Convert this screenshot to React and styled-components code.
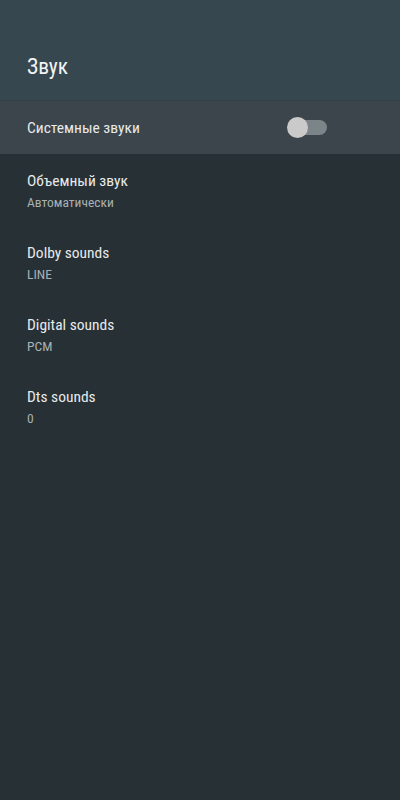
import React from 'react';
import styled, { createGlobalStyle } from 'styled-components';

const items = [
  { title: 'Объемный звук', value: 'Автоматически' },
  { title: 'Dolby sounds', value: 'LINE' },
  { title: 'Digital sounds', value: 'PCM' },
  { title: 'Dts sounds', value: '0' },
];

const App = () => {
  return (
    <Screen>
      <GlobalStyle />
      <Header>
        <Title>Звук</Title>
      </Header>
      <ToggleRow>
        <RowLabel>Системные звуки</RowLabel>
        <Switch>
          <Knob />
        </Switch>
      </ToggleRow>
      <List>
        {items.map((item) => (
          <Item key={item.title}>
            <ItemTitle>{item.title}</ItemTitle>
            <ItemValue>{item.value}</ItemValue>
          </Item>
        ))}
      </List>
    </Screen>
  );
};

const GlobalStyle = createGlobalStyle`
  html, body {
    margin: 0;
    padding: 0;
    background: #263035;
  }
  * {
    box-sizing: border-box;
  }
`;

const Screen = styled.div`
  width: 400px;
  height: 800px;
  display: flex;
  flex-direction: column;
  background: #263035;
  font-family: Roboto, 'Noto Sans', sans-serif;
  font-stretch: 80%;
  color: #eceff1;
`;

const Header = styled.header`
  height: 101px;
  display: flex;
  align-items: flex-start;
  padding: 53px 27px 0;
  background: #37474f;
  border-bottom: 1px solid #313e45;
`;

const Title = styled.h1`
  margin: 0;
  font-size: 21.5px;
  line-height: 28px;
  font-weight: 400;
  color: #f2f4f5;
`;

const ToggleRow = styled.div`
  height: 53px;
  display: flex;
  align-items: center;
  justify-content: space-between;
  padding: 0 73px 0 27px;
  background: #3b454b;
`;

const RowLabel = styled.span`
  font-size: 15.5px;
  font-weight: 450;
  color: #e8eaeb;
`;

const Switch = styled.div`
  position: relative;
  width: 39px;
  height: 15px;
  border-radius: 8px;
  background: #7b8589;
`;

const Knob = styled.div`
  position: absolute;
  left: -1px;
  top: -3px;
  width: 21px;
  height: 21px;
  border-radius: 50%;
  background: #cacaca;
`;

const List = styled.div`
  display: flex;
  flex-direction: column;
  padding-top: 16px;
`;

const Item = styled.div`
  height: 72px;
  display: flex;
  flex-direction: column;
  padding: 0 27px;
`;

const ItemTitle = styled.span`
  font-size: 15.5px;
  line-height: 22px;
  font-weight: 450;
  color: #e8eaeb;
`;

const ItemValue = styled.span`
  margin-top: 2px;
  font-size: 13.5px;
  line-height: 16px;
  color: #a9b0b3;
`;

export default App;
